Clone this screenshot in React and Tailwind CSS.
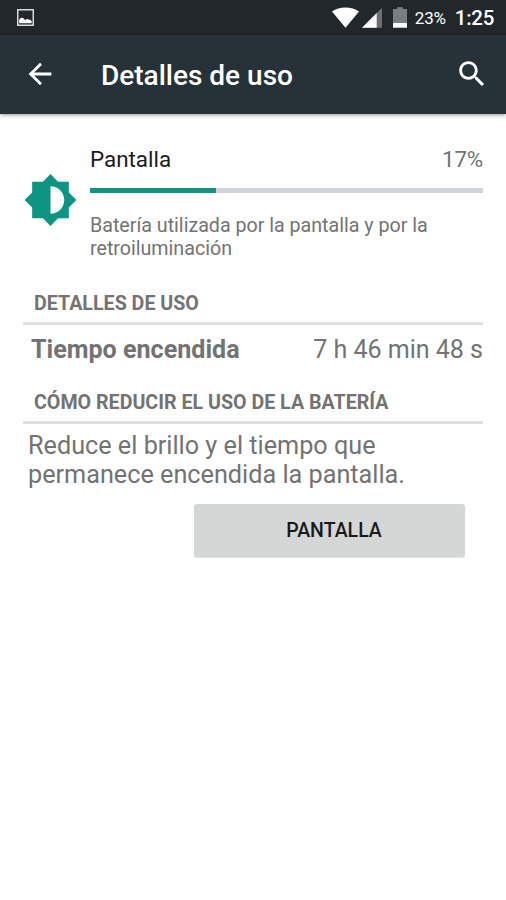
import React from 'react';

const StatusBar = () => (
  <div className="flex h-[35px] items-center bg-[#21272b] pl-[17px] pr-[12px] text-white">
    <svg className="h-[17px] w-[17px]" viewBox="0 0 17 17">
      <rect x="0.75" y="0.75" width="15.5" height="15.5" fill="none" stroke="#e4e6e7" strokeWidth="1.4" />
      <path d="M2.2 14.2V11.4C2.4 9.4 5 7.8 6.8 9.6L8.2 11.2C9.4 9.9 11 9.6 12 10.8C13.4 10.4 14.4 11.2 14.6 12.2V14.2Z" fill="#fff" />
    </svg>
    <div className="ml-auto flex items-center">
      <svg className="h-[21px] w-[27px]" viewBox="0 0 27 21">
        <path d="M0 4.4C3.8 1.7 8.4 0.4 13.5 0.4S23.2 1.7 27 4.4L13.5 20.7Z" fill="#fff" />
      </svg>
      <svg className="ml-[3px] h-[21px] w-5" viewBox="0 0 20 21">
        <path d="M0 20.7L20 0.8V20.7Z" fill="#6b7073" />
        <path d="M0 20.7L14.7 6.1V20.7Z" fill="#fff" />
      </svg>
      <svg className="ml-[11px] h-[21px] w-[14px]" viewBox="0 0 14 21">
        <path d="M0 2H4V0.3H10V2H14V16H0Z" fill="#7b7e80" />
        <path d="M0 16H14V20.7H0Z" fill="#fff" />
      </svg>
      <span className="ml-[8px] mt-px text-[17px] leading-5 tracking-[-0.2px]">23%</span>
      <span className="ml-[9px] mt-px text-[20.5px] font-medium leading-6 tracking-[-0.3px]">1:25</span>
    </div>
  </div>
);

const Toolbar = () => (
  <header className="relative flex h-[79px] items-center bg-[#263238] pl-[23px] pr-[17px] text-white shadow-[0_1px_4px_rgba(0,0,0,0.4)]">
    <svg className="mb-px h-[34px] w-[34px]" viewBox="0 0 24 24" fill="currentColor">
      <path d="M20 11H7.83l5.59-5.59L12 4l-8 8 8 8 1.41-1.41L7.83 13H20v-2z" />
    </svg>
    <h1 className="ml-[44px] mt-[3px] text-[28px] font-medium leading-8">Detalles de uso</h1>
    <svg className="mb-px ml-auto h-[34px] w-[34px]" viewBox="0 0 24 24" fill="currentColor">
      <path d="M15.5 14h-.79l-.28-.27C15.41 12.59 16 11.11 16 9.5 16 5.91 13.09 3 9.5 3S3 5.91 3 9.5 5.91 16 9.5 16c1.61 0 3.09-.59 4.23-1.57l.27.28v.79l5 4.99L20.49 19l-4.99-5zm-6 0C7.01 14 5 11.99 5 9.5S7.01 5 9.5 5 14 7.01 14 9.5 11.99 14 9.5 14z" />
    </svg>
  </header>
);

const SectionTitle = ({ children }) => (
  <h2 className="border-b-[3px] border-[#e0e0e0] pb-[6px] pl-[11px] text-[19.65px] font-bold leading-6">
    {children}
  </h2>
);

const App = () => {
  const usage = 32;

  return (
    <div className="h-[900px] w-[506px] overflow-hidden bg-[#fefefe] font-['Roboto',sans-serif] text-[#737373]">
      <StatusBar />
      <Toolbar />

      <main className="pl-[23px] pr-[23px] pt-[31px]">
        <section className="flex">
          <svg className="mt-[27px] h-[56px] w-[55px] shrink-0" viewBox="0 0 24 24" fill="#0d9483">
            <path d="M20 15.31L23.31 12 20 8.69V4h-4.69L12 .69 8.69 4H4v4.69L.69 12 4 15.31V20h4.69L12 23.31 15.31 20H20v-4.69zM12 18V6c3.31 0 6 2.69 6 6s-2.69 6-6 6z" />
          </svg>
          <div className="ml-3 grow">
            <div className="flex justify-between text-[22.4px] leading-7">
              <span className="text-[#1c1c1c]">Pantalla</span>
              <span className="tracking-[-0.2px]">17%</span>
            </div>
            <div className="mt-[15px] h-[5px] bg-[#cdd5da]">
              <div className="h-full bg-[#159282]" style={{ width: `${usage}%` }} />
            </div>
            <p className="mt-[21px] text-[19.65px] leading-[23px]">
              Batería utilizada por la pantalla y por la
              <br />
              retroiluminación
            </p>
          </div>
        </section>

        <section className="mt-[32px]">
          <SectionTitle>DETALLES DE USO</SectionTitle>
          <div className="flex justify-between pl-2 pt-[9px] text-[25.1px] leading-8">
            <span className="font-bold">Tiempo encendida</span>
            <span className="tracking-[-0.05px]">7 h 46 min 48 s</span>
          </div>
        </section>

        <section className="mt-[25px]">
          <SectionTitle>CÓMO REDUCIR EL USO DE LA BATERÍA</SectionTitle>
          <p className="pl-[5px] pt-[7px] text-[25.22px] leading-[29px]">
            Reduce el brillo y el tiempo que
            <br />
            permanece encendida la pantalla.
          </p>
          <button className="ml-auto mr-[18px] mt-[15px] block h-[53px] w-[271px] rounded-[3px] bg-[#d5d7d6] pl-[9px] pt-px text-[19.5px] font-medium text-[#1a1a1a] shadow-[0_1px_1px_rgba(0,0,0,0.12)]">
            PANTALLA
          </button>
        </section>
      </main>
    </div>
  );
};

export default App;
